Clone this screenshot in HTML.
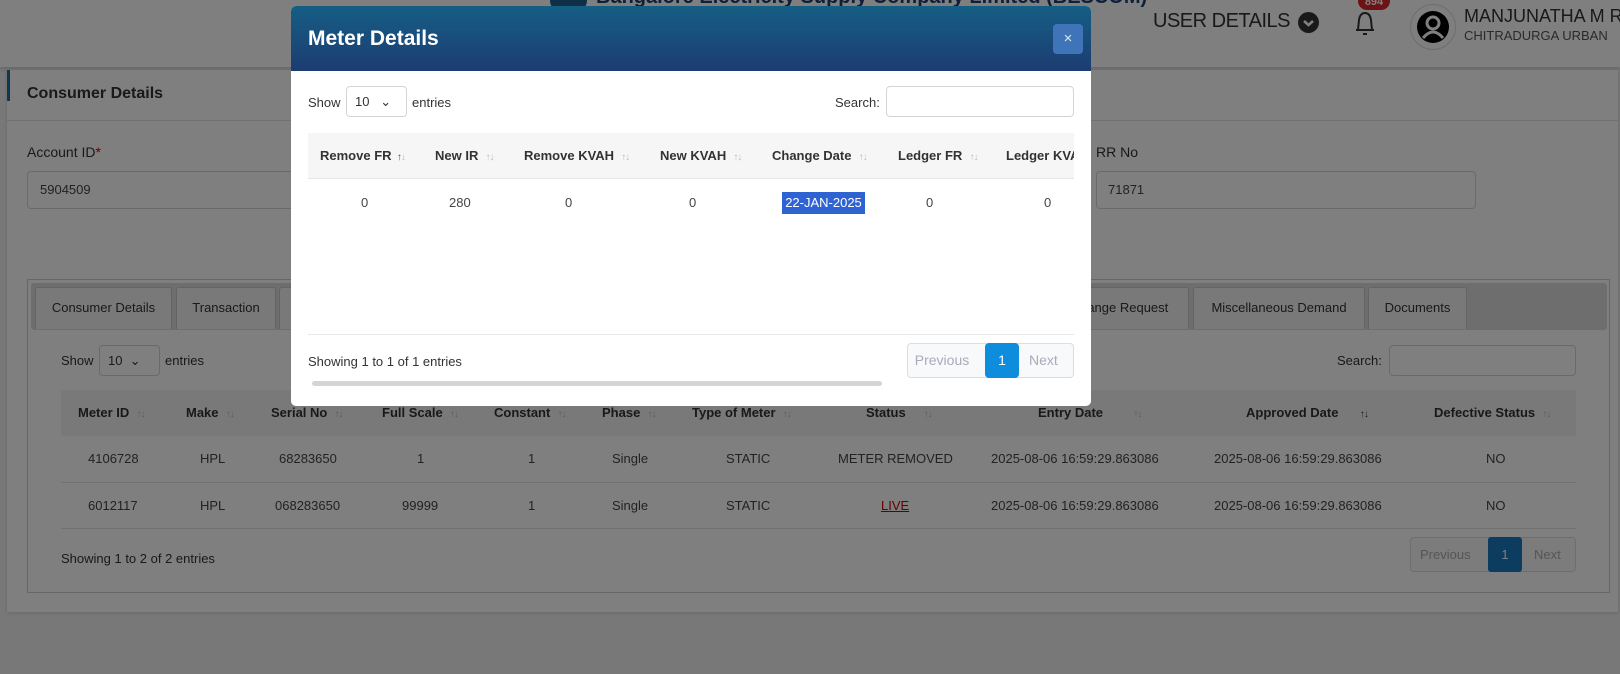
<!DOCTYPE html>
<html><head><meta charset="utf-8">
<style>
*{box-sizing:border-box;margin:0;padding:0}
body{width:1620px;height:674px;overflow:hidden;background:#f0f0f0;font-family:"Liberation Sans",Arial,sans-serif;color:#333;position:relative;font-size:13px}
.a{position:absolute;white-space:nowrap}
.inp{position:absolute;border:1px solid #d4d4d4;border-radius:4px;background:#fff}
.s{color:#bbb;font-size:10px;font-weight:normal;letter-spacing:-1px}
.tab{position:absolute;top:287px;height:42px;border:1px solid #c8c8c8;border-bottom:none;background:#f2f2f2;border-radius:3px 3px 0 0;line-height:40px;text-align:center;font-size:13px;color:#333}
.th{position:absolute;font-weight:bold;font-size:13px;color:#333;white-space:nowrap}
.td{position:absolute;font-size:13px;color:#444;white-space:nowrap;text-align:center}
</style></head><body>
<!-- header -->
<div class="a" style="left:0;top:0;width:1620px;height:67px;background:#fff;box-shadow:0 2px 4px rgba(0,0,0,.15)"></div>
<div class="a" style="left:550px;top:-12px;width:37px;height:26px;border-radius:50%;background:#1d5f8f"></div>
<div class="a" style="left:596px;top:-14px;font-size:20px;font-weight:bold;color:#1d3f73">Bangalore Electricity Supply Company Limited (BESCOM)</div>
<div class="a" style="left:1153px;top:10px;font-size:20px;color:#333;letter-spacing:-0.5px">USER DETAILS</div>
<div class="a" style="left:1298px;top:12px;width:21px;height:21px;border-radius:50%;background:#333"></div>
<svg class="a" style="left:1298px;top:12px" width="21" height="21" viewBox="0 0 21 21"><path d="M6 9 L10.5 13 L15 9" fill="none" stroke="#fff" stroke-width="2.6"/></svg>
<svg class="a" style="left:1350px;top:8px" width="30" height="30" viewBox="0 0 30 30"><path d="M8 22 L9 12 Q10 5 15 5 Q20 5 21 12 L22 22 Z M6 22 H24 M13 26 H17" fill="none" stroke="#333" stroke-width="2"/></svg>
<div class="a" style="left:1358px;top:-8px;width:32px;height:18px;border-radius:9px;background:#d9262a;color:#fff;font-size:11px;font-weight:bold;text-align:center;line-height:20px">894</div>
<div class="a" style="left:1410px;top:4px;width:46px;height:46px;border-radius:50%;border:1px solid #ddd;background:#fff"></div>
<svg class="a" style="left:1415px;top:9px" width="36" height="36" viewBox="0 0 36 36"><circle cx="18" cy="18" r="16" fill="#000"/><circle cx="18" cy="14" r="6" fill="none" stroke="#fff" stroke-width="3"/><path d="M8 29 Q18 17 28 29" fill="none" stroke="#fff" stroke-width="3"/></svg>
<div class="a" style="left:1464px;top:6px;font-size:18px;color:#333">MANJUNATHA M R</div>
<div class="a" style="left:1464px;top:28px;font-size:13px;color:#555">CHITRADURGA URBAN</div>
<!-- card -->
<div class="a" style="left:7px;top:70px;width:1611px;height:542px;background:#fff;box-shadow:0 1px 3px rgba(0,0,0,.15)"></div>
<div class="a" style="left:7px;top:70px;width:3px;height:31px;background:#1d6fa5"></div>
<div class="a" style="left:27px;top:85px;font-size:16px;font-weight:bold;color:#333">Consumer Details</div>
<div class="a" style="left:7px;top:120px;width:1611px;height:1px;background:#e5e5e5"></div>
<div class="a" style="left:27px;top:144px;font-size:14px">Account ID<span style="color:#c00">*</span></div>
<div class="inp" style="left:27px;top:171px;width:280px;height:38px"></div>
<div class="a" style="left:40px;top:182px;font-size:13px;color:#444">5904509</div>
<div class="a" style="left:1096px;top:144px;font-size:14px">RR No</div>
<div class="inp" style="left:1096px;top:171px;width:380px;height:38px"></div>
<div class="a" style="left:1108px;top:182px;font-size:13px;color:#444">71871</div>
<!-- tabs box -->
<div class="a" style="left:27px;top:279px;width:1583px;height:314px;border:1px solid #ccc;background:#fff"></div>
<div class="a" style="left:31px;top:283px;width:1576px;height:47px;background:#ddd;border-radius:3px"></div>
<div class="tab" style="left:35px;width:137px">Consumer Details</div>
<div class="tab" style="left:176px;width:100px">Transaction</div>
<div class="tab" style="left:279px;width:100px"></div>
<div class="tab" style="left:1050px;width:139px">Change Request</div>
<div class="tab" style="left:1193px;width:172px">Miscellaneous Demand</div>
<div class="tab" style="left:1368px;width:99px">Documents</div>
<div class="a" style="left:61px;top:353px;font-size:13px">Show</div>
<div class="inp" style="left:99px;top:345px;width:61px;height:31px"></div>
<div class="a" style="left:108px;top:353px">10 &nbsp;&#8964;</div>
<div class="a" style="left:165px;top:353px">entries</div>
<div class="a" style="left:1337px;top:353px">Search:</div>
<div class="inp" style="left:1389px;top:345px;width:187px;height:31px"></div>
<div class="a" style="left:61px;top:390px;width:1515px;height:46px;background:#f2f2f2"></div>
<div class="th" style="left:78px;top:405px">Meter ID <span class="s">&nbsp;&nbsp;↑↓</span></div>
<div class="th" style="left:186px;top:405px">Make <span class="s">&nbsp;&nbsp;↑↓</span></div>
<div class="th" style="left:271px;top:405px">Serial No <span class="s">&nbsp;&nbsp;↑↓</span></div>
<div class="th" style="left:382px;top:405px">Full Scale <span class="s">&nbsp;&nbsp;↑↓</span></div>
<div class="th" style="left:494px;top:405px">Constant <span class="s">&nbsp;&nbsp;↑↓</span></div>
<div class="th" style="left:602px;top:405px">Phase <span class="s">&nbsp;&nbsp;↑↓</span></div>
<div class="th" style="left:692px;top:405px">Type of Meter <span class="s">&nbsp;&nbsp;↑↓</span></div>
<div class="th" style="left:866px;top:405px">Status <span class="s">&nbsp;&nbsp;&nbsp;&nbsp;&nbsp;&nbsp;&nbsp;&nbsp;↑↓</span></div>
<div class="th" style="left:1038px;top:405px">Entry Date <span class="s">&nbsp;&nbsp;&nbsp;&nbsp;&nbsp;&nbsp;&nbsp;&nbsp;&nbsp;&nbsp;&nbsp;&nbsp;&nbsp;&nbsp;&nbsp;↑↓</span></div>
<div class="th" style="left:1246px;top:405px">Approved Date <span class="s" style="color:#333">&nbsp;&nbsp;&nbsp;&nbsp;&nbsp;&nbsp;&nbsp;&nbsp;&nbsp;&nbsp;↑↓</span></div>
<div class="th" style="left:1434px;top:405px">Defective Status <span class="s">&nbsp;&nbsp;↑↓</span></div>
<div class="a" style="left:61px;top:482px;width:1515px;height:1px;background:#e3e3e3"></div>
<div class="a" style="left:61px;top:528px;width:1515px;height:1px;background:#e3e3e3"></div>
<div class="td" style="left:88px;top:451px">4106728</div><div class="td" style="left:200px;top:451px">HPL</div><div class="td" style="left:279px;top:451px">68283650</div><div class="td" style="left:417px;top:451px">1</div><div class="td" style="left:528px;top:451px">1</div><div class="td" style="left:612px;top:451px">Single</div><div class="td" style="left:726px;top:451px">STATIC</div><div class="td" style="left:838px;top:451px">METER REMOVED</div><div class="td" style="left:991px;top:451px">2025-08-06 16:59:29.863086</div><div class="td" style="left:1214px;top:451px">2025-08-06 16:59:29.863086</div><div class="td" style="left:1486px;top:451px">NO</div>
<div class="td" style="left:88px;top:498px">6012117</div><div class="td" style="left:200px;top:498px">HPL</div><div class="td" style="left:275px;top:498px">068283650</div><div class="td" style="left:402px;top:498px">99999</div><div class="td" style="left:528px;top:498px">1</div><div class="td" style="left:612px;top:498px">Single</div><div class="td" style="left:726px;top:498px">STATIC</div><div class="td" style="left:881px;top:498px;color:#c00;text-decoration:underline">LIVE</div><div class="td" style="left:991px;top:498px">2025-08-06 16:59:29.863086</div><div class="td" style="left:1214px;top:498px">2025-08-06 16:59:29.863086</div><div class="td" style="left:1486px;top:498px">NO</div>
<div class="a" style="left:61px;top:551px">Showing 1 to 2 of 2 entries</div>
<div class="a" style="left:1410px;top:537px;width:166px;height:35px;border:1px solid #ddd;border-radius:4px;background:#f8f8f8"></div>
<div class="a" style="left:1420px;top:547px;color:#aaa">Previous</div>
<div class="a" style="left:1488px;top:537px;width:34px;height:35px;background:#1878c0;border-radius:3px;color:#fff;text-align:center;line-height:35px">1</div>
<div class="a" style="left:1534px;top:547px;color:#aaa">Next</div>
<!-- overlay -->
<div class="a" style="left:0;top:0;width:1620px;height:674px;background:rgba(0,0,0,.5)"></div>
<!-- modal -->
<div class="a" style="left:291px;top:6px;width:800px;height:400px;background:#fff;border-radius:5px;overflow:hidden">
 <div style="height:65px;background:linear-gradient(#155e84,#1d3c72)"></div>
 <div class="a" style="left:17px;top:21px;font-size:21px;font-weight:bold;color:#fff">Meter Details</div>
 <div class="a" style="left:762px;top:18px;width:30px;height:30px;border-radius:4px;background:#3f74b8;color:#dfe8f4;text-align:center;line-height:29px;font-size:15px">×</div>
 <div class="a" style="left:17px;top:89px">Show</div>
 <div class="inp" style="left:55px;top:80px;width:61px;height:31px"></div>
 <div class="a" style="left:64px;top:88px">10 &nbsp;&nbsp;&#8964;</div>
 <div class="a" style="left:121px;top:89px">entries</div>
 <div class="a" style="left:544px;top:89px">Search:</div>
 <div class="inp" style="left:595px;top:80px;width:188px;height:31px"></div>
 <div class="a" style="left:17px;top:127px;width:766px;height:46px;background:#f6f6f6;border-bottom:1px solid #e6e6e6"></div>
 <div class="th" style="left:29px;top:142px">Remove FR <span class="s" style="color:#555">&nbsp;↑</span><span class="s">↓</span></div>
 <div class="th" style="left:144px;top:142px">New IR <span class="s">&nbsp;&nbsp;↑↓</span></div>
 <div class="th" style="left:233px;top:142px">Remove KVAH <span class="s">&nbsp;&nbsp;↑↓</span></div>
 <div class="th" style="left:369px;top:142px">New KVAH <span class="s">&nbsp;&nbsp;↑↓</span></div>
 <div class="th" style="left:481px;top:142px">Change Date <span class="s">&nbsp;&nbsp;↑↓</span></div>
 <div class="th" style="left:607px;top:142px">Ledger FR <span class="s">&nbsp;&nbsp;↑↓</span></div>
 <div class="th" style="left:715px;top:142px">Ledger KVAH</div>
 <div class="a" style="left:783px;top:127px;width:20px;height:60px;background:#fff"></div>
 <div class="td" style="left:70px;top:189px">0</div>
 <div class="td" style="left:158px;top:189px">280</div>
 <div class="td" style="left:274px;top:189px">0</div>
 <div class="td" style="left:398px;top:189px">0</div>
 <div class="a" style="left:491px;top:186px;width:83px;height:22px;background:#2f63d2;color:#fff;font-size:13px;text-align:center;line-height:22px">22-JAN-2025</div>
 <div class="td" style="left:635px;top:189px">0</div>
 <div class="td" style="left:753px;top:189px">0</div>
 <div class="a" style="left:17px;top:328px;width:766px;height:1px;background:#e8e8e8"></div>
 <div class="a" style="left:17px;top:348px">Showing 1 to 1 of 1 entries</div>
 <div class="a" style="left:21px;top:375px;width:570px;height:5px;border-radius:3px;background:#d4d4d4"></div>
 <div class="a" style="left:616px;top:337px;width:167px;height:35px;border:1px solid #ddd;border-radius:4px;background:#f8f9fa"></div>
 <div class="a" style="left:611px;top:346px;width:80px;text-align:center;color:#aab;font-size:14px">Previous</div>
 <div class="a" style="left:694px;top:337px;width:34px;height:35px;background:#0d8ddb;border-radius:4px;color:#fff;text-align:center;line-height:35px;font-size:14px">1</div>
 <div class="a" style="left:738px;top:346px;color:#aab;font-size:14px">Next</div>
</div>
</body></html>
